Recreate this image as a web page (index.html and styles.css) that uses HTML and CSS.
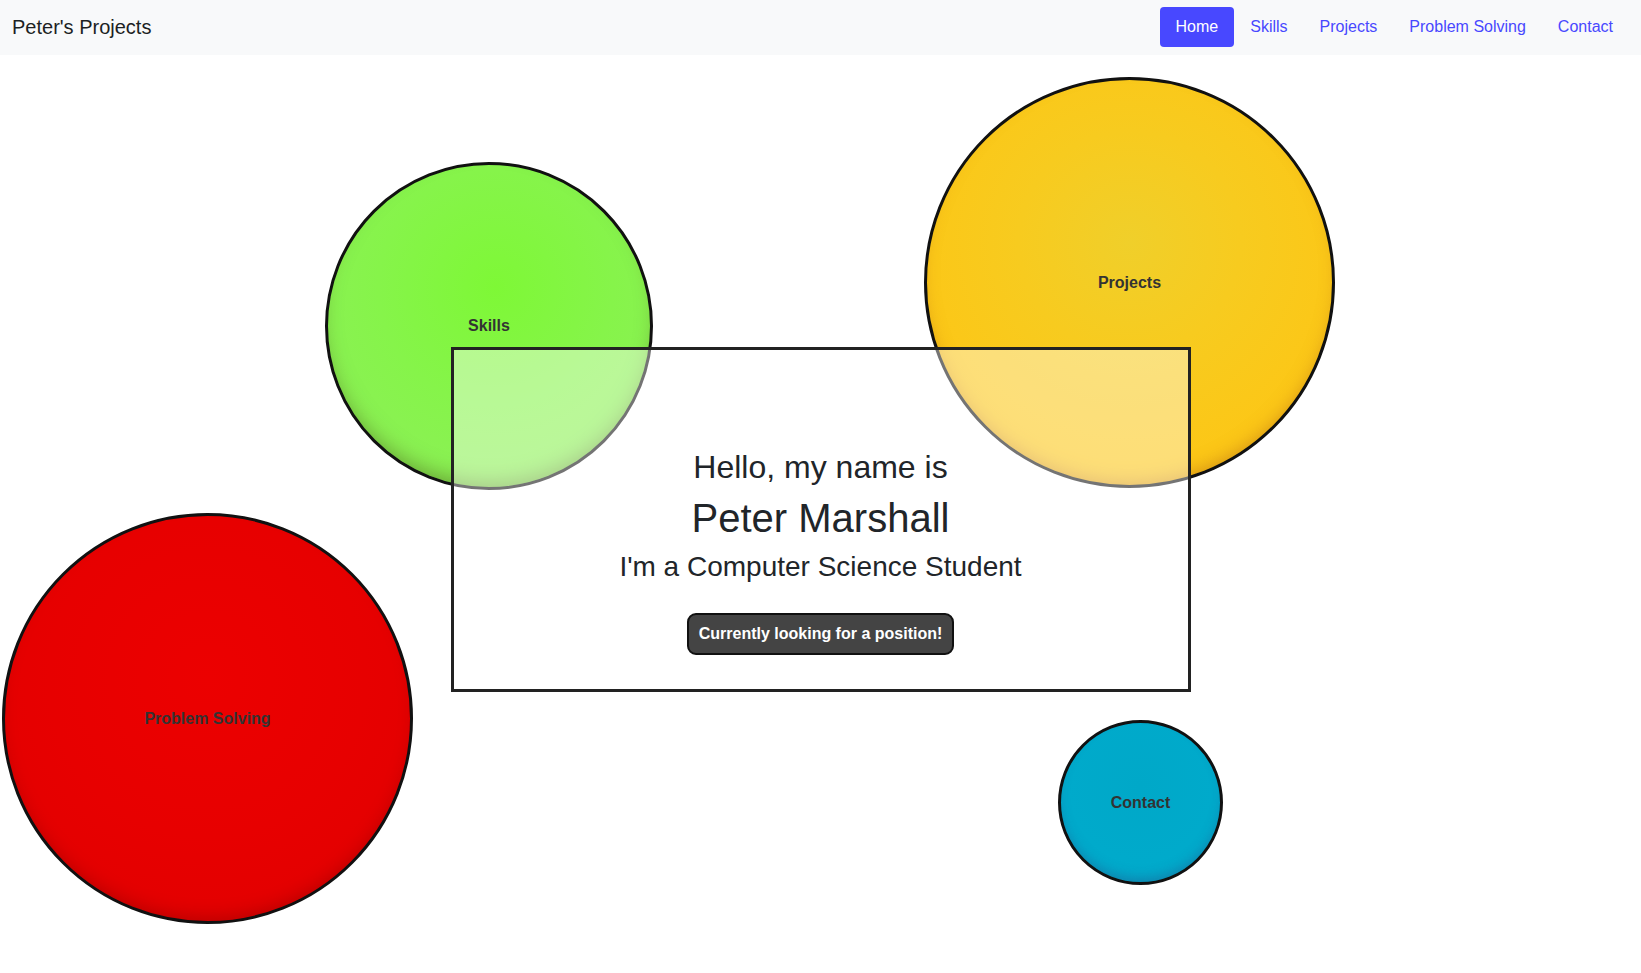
FILE: index.html
```html
<!DOCTYPE html>
<html lang="en">
<head>
<meta charset="utf-8">
<title>Peter's Projects</title>
<link rel="stylesheet" href="styles.css">
</head>
<body>
<nav class="navbar">
  <a class="brand" href="#">Peter's Projects</a>
  <ul class="nav">
    <li><a class="nav-link active" href="#">Home</a></li>
    <li><a class="nav-link" href="#">Skills</a></li>
    <li><a class="nav-link" href="#">Projects</a></li>
    <li><a class="nav-link" href="#">Problem Solving</a></li>
    <li><a class="nav-link" href="#">Contact</a></li>
  </ul>
</nav>
<main class="stage">
  <a class="bubble bubble-skills" href="#"><span>Skills</span></a>
  <a class="bubble bubble-projects" href="#"><span>Projects</span></a>
  <a class="bubble bubble-problem" href="#"><span>Problem Solving</span></a>
  <a class="bubble bubble-contact" href="#"><span>Contact</span></a>
  <section class="intro">
    <h2 class="intro-hello">Hello, my name is</h2>
    <h1 class="intro-name">Peter Marshall</h1>
    <h3 class="intro-role">I'm a Computer Science Student</h3>
    <button class="status-btn" type="button">Currently looking for a position!</button>
  </section>
</main>
</body>
</html>
```

FILE: styles.css
```css
* { box-sizing: border-box; }

html, body {
  margin: 0;
  padding: 0;
}

body {
  font-family: "Liberation Sans", Arial, sans-serif;
  font-size: 16px;
  line-height: 1.5;
  color: #212529;
  background: #ffffff;
  overflow: hidden;
}

a { text-decoration: none; }

/* ---------- navbar ---------- */
.navbar {
  display: flex;
  align-items: center;
  justify-content: space-between;
  height: 55px;
  padding: 0 12px;
  background: #f8f9fa;
}

.brand {
  font-size: 20px;
  line-height: 30px;
  padding: 5px 0;
  color: #1c1f23;
  position: relative;
  top: -1px;
}

.nav {
  display: flex;
  list-style: none;
  margin: 0;
  padding: 0;
  position: relative;
  top: -1px;
}

.nav-link {
  display: block;
  padding: 8px 16px;
  line-height: 24px;
  font-size: 16px;
  color: #4848ff;
  border-radius: 4px;
}

.nav-link.active {
  background: #4848ff;
  color: #ffffff;
}

/* ---------- stage ---------- */
.stage {
  position: relative;
  height: 918px;
  padding-top: 292px;
}

.bubble {
  position: absolute;
  display: flex;
  align-items: center;
  justify-content: center;
  border: 3px solid #111;
  border-radius: 50%;
  font-weight: bold;
  font-size: 16px;
  color: #333;
}

.bubble-skills {
  left: 325px;
  top: 107px;
  width: 328px;
  height: 328px;
  background: radial-gradient(circle at 52% 38%, #7ef836 0%, #86f44a 45%, #8cf056 80%, #8ef05a 100%);
  box-shadow: inset 0 -12px 20px -8px rgba(70, 90, 20, 0.5);
}

.bubble-projects {
  left: 924px;
  top: 22px;
  width: 411px;
  height: 411px;
  background: radial-gradient(circle at 50% 40%, #f0cf2a 0%, #f7cb1f 35%, #fcc717 70%, #ffc512 100%);
  box-shadow: inset 0 -10px 18px -8px rgba(170, 90, 20, 0.5);
}

.bubble-problem {
  left: 2px;
  top: 458px;
  width: 411px;
  height: 411px;
  background: radial-gradient(circle at 50% 40%, #ec0000 0%, #e70000 50%, #e00000 100%);
  box-shadow: inset 0 -10px 18px -8px rgba(110, 0, 0, 0.4);
}

.bubble-contact {
  left: 1058px;
  top: 665px;
  width: 165px;
  height: 165px;
  background: radial-gradient(circle at 50% 40%, #00a8c8 0%, #00aacb 60%, #00afd0 100%);
  box-shadow: inset 0 -8px 14px -6px rgba(40, 60, 120, 0.45);
}

/* ---------- intro box ---------- */
.intro {
  position: relative;
  z-index: 1;
  width: 740px;
  height: 345px;
  margin: 0 auto;
  padding-top: 98px;
  border: 3px solid #222;
  background: rgba(255, 255, 255, 0.42);
  display: flex;
  flex-direction: column;
  align-items: center;
  text-align: center;
}

.intro h1,
.intro h2,
.intro h3 {
  margin: 0 0 8px;
  font-weight: 500;
  line-height: 1.2;
  color: #212529;
}

.intro-hello { font-size: 32px; }
.intro-name { font-size: 40px; }
.intro-role { font-size: 28px; }

.status-btn {
  margin-top: 21px;
  height: 42px;
  padding: 0 10px;
  font-family: "Liberation Sans", Arial, sans-serif;
  font-size: 16px;
  line-height: 24px;
  font-weight: bold;
  color: #ffffff;
  background: #444444;
  border: 2px solid #111;
  border-radius: 9px;
}
```
